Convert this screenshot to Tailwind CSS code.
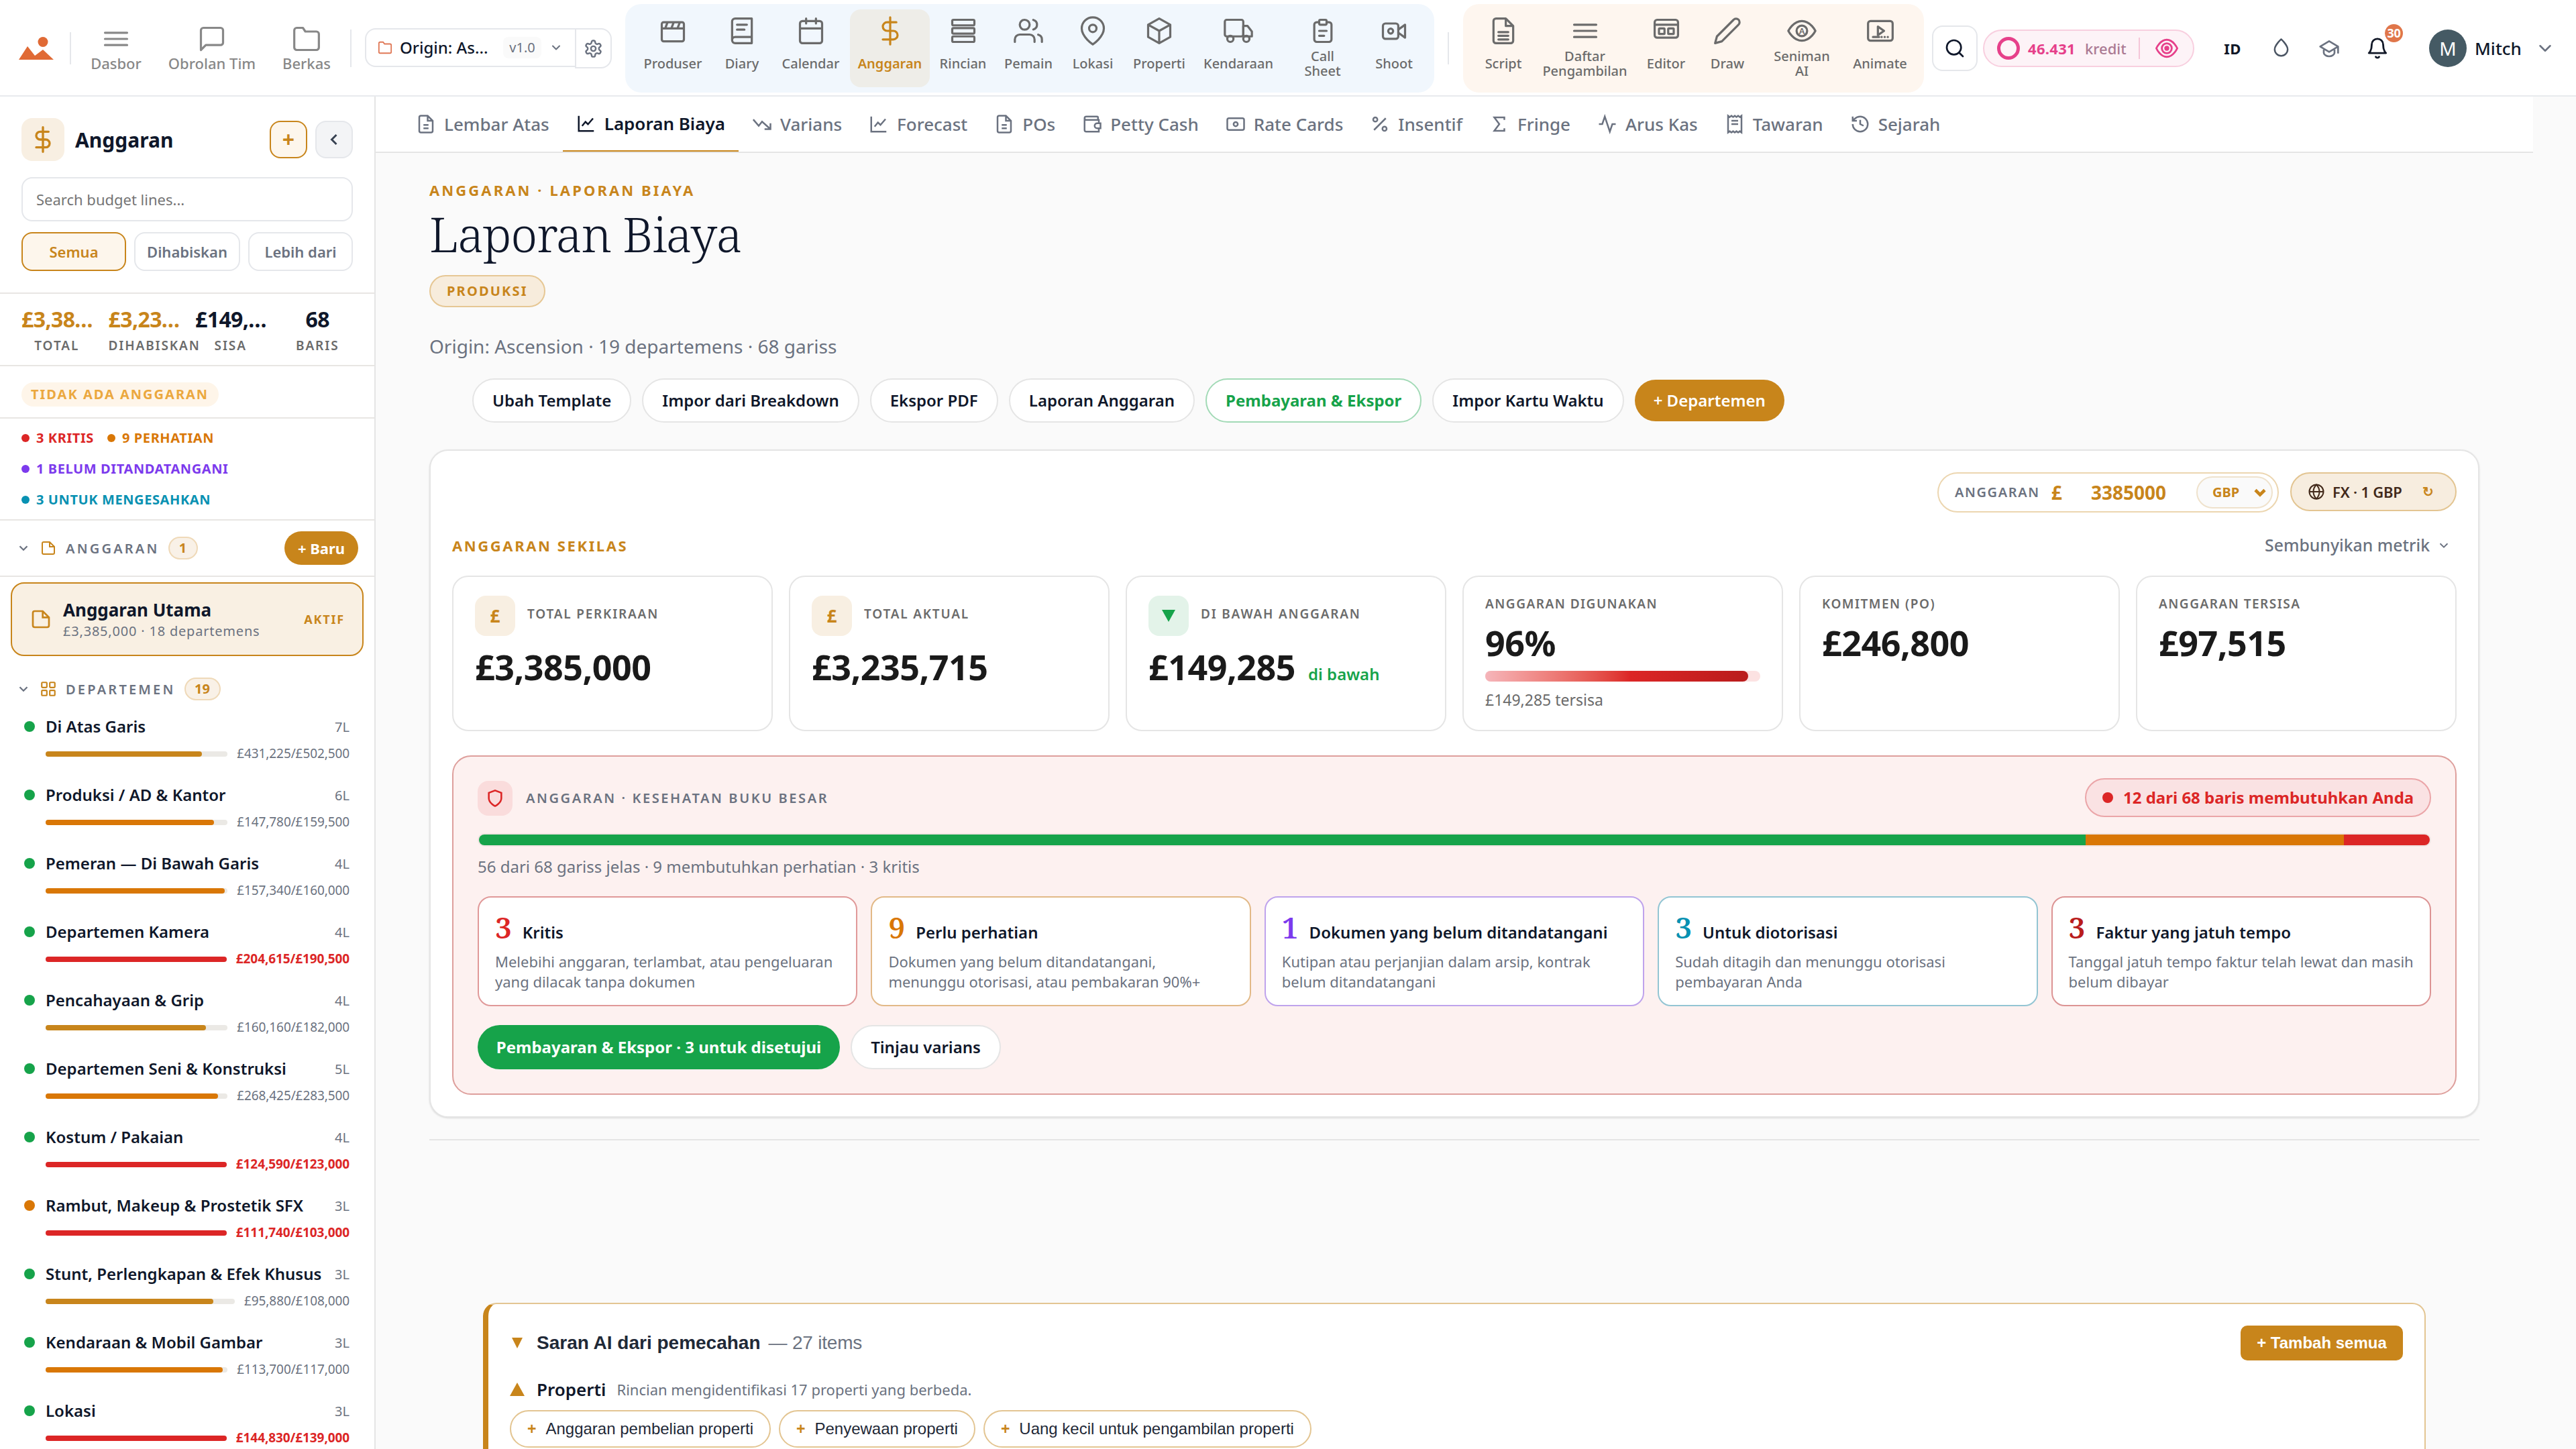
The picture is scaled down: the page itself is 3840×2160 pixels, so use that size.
<!DOCTYPE html>
<html lang="id">
<head>
    <meta charset="UTF-8">
    <meta name="viewport" content="width=device-width, initial-scale=1.0">
    <title>Anggaran - Laporan Biaya</title>
    <script src="https://cdn.jsdelivr.net/npm/@tailwindcss/browser@4"></script>
</head>
<body class="w-[3840px] h-[2160px] overflow-hidden bg-[#fafafa] font-['Noto_Sans',sans-serif] text-[#0f172a]">

    <!-- Icon sprite -->
    <svg class="hidden" xmlns="http://www.w3.org/2000/svg">
        <symbol id="menu" viewBox="0 0 24 24"><path d="M3 7h18M3 12h18M3 17h18"/></symbol>
        <symbol id="chat" viewBox="0 0 24 24"><path d="M21 15a2 2 0 0 1-2 2H7l-4 4V5a2 2 0 0 1 2-2h14a2 2 0 0 1 2 2z"/></symbol>
        <symbol id="folder" viewBox="0 0 24 24"><path d="M22 19a2 2 0 0 1-2 2H4a2 2 0 0 1-2-2V5a2 2 0 0 1 2-2h5l2 3h9a2 2 0 0 1 2 2z"/></symbol>
        <symbol id="chevron" viewBox="0 0 24 24"><path d="m6 9 6 6 6-6"/></symbol>
        <symbol id="gear" viewBox="0 0 24 24"><circle cx="12" cy="12" r="3"/><path d="M12.22 2h-.44a2 2 0 0 0-2 2v.18a2 2 0 0 1-1 1.73l-.43.25a2 2 0 0 1-2 0l-.15-.08a2 2 0 0 0-2.73.73l-.22.38a2 2 0 0 0 .73 2.73l.15.1a2 2 0 0 1 1 1.72v.51a2 2 0 0 1-1 1.74l-.15.09a2 2 0 0 0-.73 2.73l.22.38a2 2 0 0 0 2.73.73l.15-.08a2 2 0 0 1 2 0l.43.25a2 2 0 0 1 1 1.73V20a2 2 0 0 0 2 2h.44a2 2 0 0 0 2-2v-.18a2 2 0 0 1 1-1.73l.43-.25a2 2 0 0 1 2 0l.15.08a2 2 0 0 0 2.73-.73l.22-.39a2 2 0 0 0-.73-2.73l-.15-.08a2 2 0 0 1-1-1.74v-.5a2 2 0 0 1 1-1.74l.15-.09a2 2 0 0 0 .73-2.73l-.22-.38a2 2 0 0 0-2.73-.73l-.15.08a2 2 0 0 1-2 0l-.43-.25a2 2 0 0 1-1-1.73V4a2 2 0 0 0-2-2z"/></symbol>
        <symbol id="clapper" viewBox="0 0 24 24"><rect x="3" y="5" width="18" height="15.5" rx="1.5"/><path d="M3 10h18M7.5 5.5 6 9.5M12.5 5.5 11 9.5M17.5 5.5 16 9.5"/></symbol>
        <symbol id="book" viewBox="0 0 24 24"><path d="M20 2H6.5A2.5 2.5 0 0 0 4 4.5v15A2.5 2.5 0 0 0 6.5 22H20zM4 19.5A2.5 2.5 0 0 1 6.5 17H20M8 7h8M8 11h6"/></symbol>
        <symbol id="calendar" viewBox="0 0 24 24"><rect x="3" y="4" width="18" height="18" rx="2"/><path d="M16 2v4M8 2v4M3 10h18"/></symbol>
        <symbol id="dollar" viewBox="0 0 24 24"><path d="M12 1v22M17 5H9.5a3.5 3.5 0 0 0 0 7h5a3.5 3.5 0 0 1 0 7H6"/></symbol>
        <symbol id="rows" viewBox="0 0 24 24"><rect x="3" y="3" width="18" height="4.5" rx="1"/><rect x="3" y="9.75" width="18" height="4.5" rx="1"/><rect x="3" y="16.5" width="18" height="4.5" rx="1"/></symbol>
        <symbol id="users" viewBox="0 0 24 24"><path d="M17 21v-2a4 4 0 0 0-4-4H5a4 4 0 0 0-4 4v2M23 21v-2a4 4 0 0 0-3-3.87M16 3.13a4 4 0 0 1 0 7.75"/><circle cx="9" cy="7" r="4"/></symbol>
        <symbol id="pin" viewBox="0 0 24 24"><path d="M21 10c0 7-9 13-9 13s-9-6-9-13a9 9 0 0 1 18 0z"/><circle cx="12" cy="10" r="3"/></symbol>
        <symbol id="box" viewBox="0 0 24 24"><path d="M12 2l9 5v10l-9 5-9-5V7zM3 7l9 5 9-5M12 12v10"/></symbol>
        <symbol id="truck" viewBox="0 0 24 24"><rect x="1" y="3" width="15" height="13.5" rx="1.5"/><path d="M16 8h3.5L23 12.5v4h-7z"/><circle cx="5.5" cy="18.5" r="2.5"/><circle cx="18.5" cy="18.5" r="2.5"/></symbol>
        <symbol id="clipboard" viewBox="0 0 24 24"><path d="M15 5h2a2 2 0 0 1 2 2v12a2 2 0 0 1-2 2H7a2 2 0 0 1-2-2V7a2 2 0 0 1 2-2h2M9 12h6M9 16h4"/><rect x="9" y="3" width="6" height="4" rx="1"/></symbol>
        <symbol id="camera" viewBox="0 0 24 24"><rect x="3" y="6" width="12.5" height="12.5" rx="2"/><circle cx="9.3" cy="12.2" r="2"/><path d="M15.5 11 21 7v10.5l-5.5-4"/></symbol>
        <symbol id="script" viewBox="0 0 24 24"><path d="M14 2H6a2 2 0 0 0-2 2v16a2 2 0 0 0 2 2h12a2 2 0 0 0 2-2V8zM14 2v6h6M8 13h8M8 16h8M8 19h8"/></symbol>
        <symbol id="editor" viewBox="0 0 24 24"><rect x="2.5" y="3" width="19" height="14.5" rx="2"/><path d="M2.5 7h19"/><rect x="6" y="10" width="4.5" height="4.5" rx=".5"/><rect x="13.5" y="10" width="4.5" height="4.5" rx=".5"/></symbol>
        <symbol id="pencil" viewBox="0 0 24 24"><path d="M17 3a2.83 2.83 0 1 1 4 4L7.5 20.5 2 22l1.5-5.5z"/></symbol>
        <symbol id="eye-a" viewBox="0 0 24 24"><path d="M1 12s4-8 11-8 11 8 11 8-4 8-11 8S1 12 1 12z"/><circle cx="12" cy="12" r="4.3"/><text x="12" y="14.6" text-anchor="middle" font-size="7" font-weight="600" fill="currentColor" stroke="none">A</text></symbol>
        <symbol id="animate" viewBox="0 0 24 24"><rect x="2" y="4" width="20" height="16" rx="2"/><path d="m10 8.500 5 3.500-5 3.500z"/><path d="M6 17h5M13 17h.1M15.500 17h.1M18 17h.1"/></symbol>
        <symbol id="search" viewBox="0 0 24 24"><circle cx="11" cy="11" r="8"/><path d="m21 21-4.350-4.350"/></symbol>
        <symbol id="eye-target" viewBox="0 0 24 24"><path d="M1 12s4-9 11-9 11 9 11 9-4 9-11 9S1 12 1 12z"/><circle cx="12" cy="12" r="5.200"/><circle cx="12" cy="12" r="1.600" fill="currentColor"/></symbol>
        <symbol id="drop" viewBox="0 0 24 24"><path d="M12 2s8 7.500 8 12.500a8 8 0 0 1-16 0C4 9.500 12 2 12 2z"/></symbol>
        <symbol id="cap" viewBox="0 0 24 24"><path d="M22 10 12 4 2 10l10 6zM6 12.500V17c0 2 3 4 6 4s6-2 6-4v-4.500M22 10v7"/></symbol>
        <symbol id="bell" viewBox="0 0 24 24"><path d="M18 8A6 6 0 0 0 6 8c0 7-3 9-3 9h18s-3-2-3-9M13.730 21a2 2 0 0 1-3.460 0"/></symbol>
        <symbol id="file-text" viewBox="0 0 24 24"><path d="M14 2H6a2 2 0 0 0-2 2v16a2 2 0 0 0 2 2h12a2 2 0 0 0 2-2V8zM14 2v6h6M9 13h6M9 17h6"/></symbol>
        <symbol id="file" viewBox="0 0 24 24"><path d="M14 3H5a2 2 0 0 0-2 2v14a2 2 0 0 0 2 2h14a2 2 0 0 0 2-2V10zM14 3v7h7"/></symbol>
        <symbol id="chart" viewBox="0 0 24 24"><path d="M3 3v18h18M7 15l4-5 3 3 6-7"/></symbol>
        <symbol id="trend-down" viewBox="0 0 24 24"><path d="M1.500 6.500 8 14l4-5 10 9M22 11v7h-7"/></symbol>
        <symbol id="wallet" viewBox="0 0 24 24"><path d="M19 7V4a1 1 0 0 0-1-1H5a2 2 0 0 0 0 4h15v4M3 5v14a2 2 0 0 0 2 2h15v-4"/><path d="M22 11h-4a3 3 0 0 0 0 6h4z"/></symbol>
        <symbol id="cash" viewBox="0 0 24 24"><rect x="2" y="5" width="20" height="14" rx="2"/><circle cx="12" cy="12" r="2.500"/><path d="M6 12h.1M18 12h.1"/></symbol>
        <symbol id="percent" viewBox="0 0 24 24"><path d="M19 5 5 19"/><circle cx="6.500" cy="6.500" r="2.500"/><circle cx="17.500" cy="17.500" r="2.500"/></symbol>
        <symbol id="sigma" viewBox="0 0 24 24"><path d="M18 7V4H6l6 8-6 8h12v-3"/></symbol>
        <symbol id="pulse" viewBox="0 0 24 24"><path d="M22 12h-4l-3 9L9 3l-3 9H2"/></symbol>
        <symbol id="receipt" viewBox="0 0 24 24"><path d="M4 2v20l2-1.500L8 22l2-1.500 2 1.500 2-1.500 2 1.500 2-1.500 2 1.500V2l-2 1.500L16 2l-2 1.500L12 2l-2 1.500L8 2 6 3.500zM8 8h8M8 12h8"/></symbol>
        <symbol id="history" viewBox="0 0 24 24"><path d="M3 12a9 9 0 1 0 9-9 9.750 9.750 0 0 0-6.740 2.740L3 8M3 3v5h5M12 7v5l4 2"/></symbol>
        <symbol id="grid" viewBox="0 0 24 24"><rect x="3" y="3" width="7" height="7" rx="1"/><rect x="14" y="3" width="7" height="7" rx="1"/><rect x="3" y="14" width="7" height="7" rx="1"/><rect x="14" y="14" width="7" height="7" rx="1"/></symbol>
        <symbol id="shield" viewBox="0 0 24 24"><path d="M12 22s8-4 8-10V5l-8-3-8 3v7c0 6 8 10 8 10z"/></symbol>
        <symbol id="globe" viewBox="0 0 24 24"><circle cx="12" cy="12" r="10.500"/><path d="M1.500 12h21M12 1.500c3 3 4.500 6.500 4.500 10.500s-1.500 7.500-4.500 10.500C9 19.500 7.500 16 7.500 12S9 4.500 12 1.500z"/></symbol>
    </svg>

    <!-- Top bar -->
    <header class="flex items-center h-[144px] pl-7 bg-white shadow-[inset_0_-2px_0_#e8eaed] fill-none stroke-current [stroke-linecap:round] [stroke-linejoin:round]">
        <svg class="w-[52px] h-[34px] shrink-0 fill-[#e06a35] stroke-none" viewBox="0 0 52 34"><path d="M0 34 13 14l11 14 12-9 16 15z"/><circle cx="36" cy="7.500" r="7.500"/></svg>
        <div class="w-0.5 h-12 ml-6 shrink-0 bg-[#e5e7eb]"></div>
        <nav class="flex gap-1.5 ml-[13px] shrink-0 text-[22px] leading-7 font-medium text-[#888888] stroke-[1.75]">
            <a class="w-[108px] flex flex-col items-center whitespace-nowrap"><svg class="size-11"><use href="#menu"/></svg>Dasbor</a>
            <a class="w-[166px] flex flex-col items-center whitespace-nowrap"><svg class="size-11"><use href="#chat"/></svg>Obrolan Tim</a>
            <a class="w-[104px] flex flex-col items-center whitespace-nowrap"><svg class="size-11"><use href="#folder"/></svg>Berkas</a>
        </nav>
        <div class="w-0.5 h-14 ml-[13px] shrink-0 bg-[#e5e7eb]"></div>
        <div class="flex items-start h-[60px] ml-5 shrink-0">
            <div class="w-[313px] h-[58px] flex items-center pl-[17px] border-2 border-r-0 border-[#e5e7eb] rounded-l-2xl">
                <svg class="size-[22px] text-[#e07856] stroke-2"><use href="#folder"/></svg>
                <span class="ml-[11px] w-[134px] text-[24px] font-medium whitespace-nowrap">Origin: As...</span>
                <span class="ml-5 w-[57px] h-8 rounded-lg bg-[#fafafa] text-[20px] leading-8 text-center text-[#6b7280]">v1.0</span>
                <svg class="ml-3 size-5 text-[#6b7280] stroke-[2.5]"><use href="#chevron"/></svg>
            </div>
            <div class="w-[55px] h-[60px] flex items-center justify-center border-2 border-[#e5e7eb] rounded-r-2xl text-[#6b7280]"><svg class="size-[29px] stroke-2"><use href="#gear"/></svg></div>
        </div>

        <nav class="flex items-center gap-1 h-[132px] ml-5 px-4 shrink-0 rounded-[24px] bg-[#f1f7fd] text-[20px] leading-[22px] font-medium text-[#6b6b6b] text-center stroke-[1.75]">
            <a class="w-[110px] h-[116px] pt-2.5 flex flex-col items-center"><svg class="size-11"><use href="#clapper"/></svg><span class="h-11 mt-[5px] flex items-center">Produser</span></a>
            <a class="w-[88px] h-[116px] pt-2.5 flex flex-col items-center"><svg class="size-11"><use href="#book"/></svg><span class="h-11 mt-[5px] flex items-center">Diary</span></a>
            <a class="w-[109px] h-[116px] pt-2.5 flex flex-col items-center"><svg class="size-11"><use href="#calendar"/></svg><span class="h-11 mt-[5px] flex items-center">Calendar</span></a>
            <a class="w-[119px] h-[116px] pt-2.5 flex flex-col items-center rounded-2xl bg-[#eeede8] text-[#c8851b] font-semibold"><svg class="size-11"><use href="#dollar"/></svg><span class="h-11 mt-[5px] flex items-center">Anggaran</span></a>
            <a class="w-[91px] h-[116px] pt-2.5 flex flex-col items-center"><svg class="size-11"><use href="#rows"/></svg><span class="h-11 mt-[5px] flex items-center">Rincian</span></a>
            <a class="w-[96px] h-[116px] pt-2.5 flex flex-col items-center"><svg class="size-11"><use href="#users"/></svg><span class="h-11 mt-[5px] flex items-center">Pemain</span></a>
            <a class="w-[88px] h-[116px] pt-2.5 flex flex-col items-center"><svg class="size-11"><use href="#pin"/></svg><span class="h-11 mt-[5px] flex items-center">Lokasi</span></a>
            <a class="w-[102px] h-[116px] pt-2.5 flex flex-col items-center"><svg class="size-11"><use href="#box"/></svg><span class="h-11 mt-[5px] flex items-center">Properti</span></a>
            <a class="w-[126px] h-[116px] pt-2.5 flex flex-col items-center"><svg class="size-11"><use href="#truck"/></svg><span class="h-11 mt-[5px] flex items-center">Kendaraan</span></a>
            <a class="w-[117px] h-[116px] pt-2.5 flex flex-col items-center"><svg class="size-11"><use href="#clipboard"/></svg><span class="h-11 mt-[5px] flex items-center">Call<br>Sheet</span></a>
            <a class="w-[88px] h-[116px] pt-2.5 flex flex-col items-center"><svg class="size-11"><use href="#camera"/></svg><span class="h-11 mt-[5px] flex items-center">Shoot</span></a>
        </nav>
        <div class="w-0.5 h-12 ml-5 shrink-0 bg-[#e5e7eb]"></div>
        <nav class="flex items-center gap-1 h-[132px] ml-[21px] px-4 shrink-0 rounded-[24px] bg-[#fef6ef] text-[20px] leading-[22px] font-medium text-[#6b6b6b] text-center stroke-[1.75]">
            <a class="w-[88px] h-[116px] pt-2.5 flex flex-col items-center"><svg class="size-11"><use href="#script"/></svg><span class="h-11 mt-[5px] flex items-center">Script</span></a>
            <a class="w-[147px] h-[116px] pt-2.5 flex flex-col items-center"><svg class="size-11"><use href="#menu"/></svg><span class="h-11 mt-[5px] flex items-center">Daftar<br>Pengambilan</span></a>
            <a class="w-[87px] h-[116px] pt-2.5 flex flex-col items-center"><svg class="size-11"><use href="#editor"/></svg><span class="h-11 mt-[5px] flex items-center">Editor</span></a>
            <a class="w-[88px] h-[116px] pt-2.5 flex flex-col items-center"><svg class="size-11"><use href="#pencil"/></svg><span class="h-11 mt-[5px] flex items-center">Draw</span></a>
            <a class="w-[126px] h-[116px] pt-2.5 flex flex-col items-center"><svg class="size-11"><use href="#eye-a"/></svg><span class="h-11 mt-[5px] flex items-center">Seniman<br>AI</span></a>
            <a class="w-[99px] h-[116px] pt-2.5 flex flex-col items-center"><svg class="size-11"><use href="#animate"/></svg><span class="h-11 mt-[5px] flex items-center">Animate</span></a>
        </nav>

        <button class="size-[68px] ml-[12px] shrink-0 flex items-center justify-center border-2 border-[#e5e7eb] rounded-2xl"><svg class="size-8 stroke-2"><use href="#search"/></svg></button>
        <div class="flex items-center w-[315px] h-14 ml-2 pl-[19px] shrink-0 rounded-full border-2 border-[#f8cfdf] bg-[#fdf3f7]">
            <div class="size-[34px] rounded-full border-[5px] border-[#e6408a]"></div>
            <span class="ml-3 text-[22px] font-bold text-[#e6408a] tracking-[0.3px]">46.431</span>
            <span class="ml-[14px] text-[22px] font-medium text-[#ab7a93]">kredit</span>
            <div class="w-0.5 h-8 ml-[18px] bg-[#f5c6d8]"></div>
            <svg class="size-[34px] ml-[23px] text-[#e6408a] stroke-2"><use href="#eye-target"/></svg>
        </div>
        <div class="flex ml-[21px] shrink-0 text-[#4b5563] stroke-2">
            <div class="w-[72px] text-center text-[22px] leading-9 font-bold text-[#111827] tracking-[0.5px]">ID</div>
            <div class="w-[72px] pb-1 flex items-center justify-center"><svg class="size-[29px]"><use href="#drop"/></svg></div>
            <div class="w-[72px] flex items-center justify-center text-[#6b7280]"><svg class="size-8"><use href="#cap"/></svg></div>
            <div class="w-[72px] flex items-center justify-center relative text-[#111827]"><svg class="size-[34px]"><use href="#bell"/></svg>
                <span class="absolute -top-[18px] right-[-2px] size-[27px] rounded-full bg-[#e0764a] text-white text-[18px] leading-[26px] font-bold text-center tracking-[-0.3px]">30</span>
            </div>
        </div>
        <div class="size-14 ml-[41px] shrink-0 rounded-full bg-[#455a64] text-white text-[28px] leading-14 text-center">M</div>
        <span class="ml-3 text-[26px] font-medium">Mitch</span>
        <svg class="size-[30px] ml-[20px] shrink-0 text-[#6b7280] stroke-2"><use href="#chevron"/></svg>
    </header>

    <div class="flex h-[2016px]">
        <!-- Sidebar -->
        <aside class="w-[560px] shrink-0 bg-white border-r-2 border-[#e5e5e5] overflow-hidden">
            <div class="p-8 border-b-2 border-[#e8e6e3]">
                <div class="flex items-center">
                    <div class="size-16 rounded-2xl bg-[#f8efe2] flex items-center justify-center"><svg class="size-10 fill-none stroke-[#c8851b] stroke-2 [stroke-linecap:round]"><use href="#dollar"/></svg></div>
                    <h2 class="ml-4 text-[30px] font-bold">Anggaran</h2>
                    <button class="ml-auto size-14 rounded-2xl border-2 border-[#c8851b] bg-[#fdf6ec] text-[#c8851b] text-[32px] leading-none font-bold">+</button>
                    <button class="ml-3 size-14 rounded-2xl border-2 border-[#e5e7eb] bg-[#f3f4f6] flex items-center justify-center"><svg class="size-7 rotate-90 fill-none stroke-[#374151] stroke-[2.5]"><use href="#chevron"/></svg></button>
                </div>
                <input type="text" placeholder="Search budget lines..." class="block w-full h-[66px] mt-6 px-5 rounded-2xl border-2 border-[#e5e7eb] text-[22px] placeholder:text-[#757575]">
                <div class="flex gap-3 mt-4 text-[22px] font-semibold text-[#6b7280]">
                    <button class="w-[156px] h-[58px] rounded-2xl border-2 border-[#c8851b] bg-[#fdf6ec] text-[#c8851b]">Semua</button>
                    <button class="w-[158px] h-[58px] rounded-2xl border-2 border-[#e5e7eb]">Dihabiskan</button>
                    <button class="w-[156px] h-[58px] rounded-2xl border-2 border-[#e5e7eb]">Lebih dari</button>
                </div>
            </div>
            <div class="grid grid-cols-4 gap-6 px-8 pt-[18px] pb-[17px] border-b-2 border-[#e8e6e3] text-center whitespace-nowrap">
                <div class="min-w-0"><div class="text-[32px] leading-10 font-bold tracking-[-0.6px] text-[#c8851b]">£3,38…</div><div class="mt-[7px] text-[19px] leading-6 font-semibold tracking-[1.9px] text-[#6b6b6b]">TOTAL</div></div>
                <div class="min-w-0"><div class="text-[32px] leading-10 font-bold tracking-[-0.6px] text-[#c8851b]">£3,23…</div><div class="mt-[7px] text-[19px] leading-6 font-semibold tracking-[1.9px] text-[#6b6b6b]">DIHABISKAN</div></div>
                <div class="min-w-0"><div class="text-[32px] leading-10 font-bold tracking-[-0.6px]">£149,…</div><div class="mt-[7px] text-[19px] leading-6 font-semibold tracking-[1.9px] text-[#6b6b6b]">SISA</div></div>
                <div class="min-w-0"><div class="text-[32px] leading-10 font-bold tracking-[-0.6px]">68</div><div class="mt-[7px] text-[19px] leading-6 font-semibold tracking-[1.9px] text-[#6b6b6b]">BARIS</div></div>
            </div>
            <div class="px-8 pt-6 pb-4 border-b-2 border-[#e8e6e3]">
                <div class="w-[294px] h-9 pl-3.5 rounded-full bg-[#fef5e9] text-[20px] leading-9 font-bold tracking-[2px] text-[#eba83f] whitespace-nowrap">TIDAK ADA ANGGARAN</div>
            </div>
            <div class="flex flex-wrap gap-x-5 gap-y-5 px-8 pt-4 pb-4 border-b-2 border-[#e8e6e3] text-[20px] leading-[26px] font-bold tracking-[0.6px]">
                <span class="flex items-center text-[#dc2626]"><i class="size-3 mr-2.5 rounded-full bg-[#dc2626]"></i>3 KRITIS</span>
                <span class="flex items-center text-[#d97706]"><i class="size-3 mr-2.5 rounded-full bg-[#d97706]"></i>9 PERHATIAN</span>
                <span class="w-full flex items-center text-[#7c3aed]"><i class="size-3 mr-2.5 rounded-full bg-[#7c3aed]"></i>1 BELUM DITANDATANGANI</span>
                <span class="w-full flex items-center text-[#0891b2]"><i class="size-3 mr-2.5 rounded-full bg-[#0891b2]"></i>3 UNTUK MENGESAHKAN</span>
            </div>
            <div class="flex items-center h-[84px] pl-6 pr-6 border-b-2 border-[#e8e6e3] fill-none">
                <svg class="size-[22px] stroke-[#6b7280] stroke-[2.5]"><use href="#chevron"/></svg>
                <svg class="size-6 ml-3.5 stroke-[#c8851b] stroke-2"><use href="#file"/></svg>
                <span class="ml-3.5 pt-0.5 text-[20px] font-semibold tracking-[3.2px] text-[#6b7280]">ANGGARAN</span>
                <span class="ml-[13px] w-11 h-[34px] rounded-full border-2 border-[#efd9b8] bg-[#f9f1e7] text-[20px] leading-[29px] text-center font-bold text-[#c8851b]">1</span>
                <button class="ml-auto w-[110px] h-[50px] rounded-full bg-[#c8851b] text-white text-[22px] font-bold">+ Baru</button>
            </div>
            <div class="flex items-center h-[110px] mt-2 mx-4 pl-[27px] pr-[26px] rounded-[20px] border-2 border-[#c8851b] bg-[#f9f0e3]">
                <svg class="size-8 shrink-0 fill-none stroke-[#c8851b] stroke-2"><use href="#file"/></svg>
                <div class="ml-[17px]">
                    <div class="text-[26px] leading-9 font-bold">Anggaran Utama</div>
                    <div class="text-[20px] leading-7 tracking-[0.8px] text-[#6b7280]">£3,385,000 · 18 departemens</div>
                </div>
                <span class="ml-auto text-[18px] font-bold tracking-[1.8px] text-[#c8851b]">AKTIF</span>
            </div>
            <div class="flex items-center h-[34px] mt-8 pl-6 fill-none">
                <svg class="size-[22px] stroke-[#6b7280] stroke-[2.5]"><use href="#chevron"/></svg>
                <svg class="size-[26px] ml-[13px] stroke-[#c8851b] stroke-2"><use href="#grid"/></svg>
                <span class="ml-[13px] pt-0.5 text-[20px] font-semibold tracking-[3.2px] text-[#6b7280]">DEPARTEMEN</span>
                <span class="ml-[13px] w-[54px] h-[34px] rounded-full border-2 border-[#efd9b8] bg-[#f9f1e7] text-[20px] leading-[29px] text-center font-bold text-[#c8851b]">19</span>
            </div>
            <div id="departments" class="mt-[21px] pl-9 pr-[37px]"></div>
        </aside>

        <!-- Main -->
        <main class="flex-1 min-w-0">
            <nav class="flex items-stretch w-[3216px] h-[84px] pl-10 bg-white shadow-[inset_0_-2px_0_#e5e5e5] text-[26px] text-[#6b7280] font-medium fill-none stroke-current stroke-2">
                <a class="flex items-center gap-3 px-5 pb-0.5"><svg class="size-[30px]"><use href="#file-text"/></svg>Lembar Atas</a>
                <a class="flex items-center gap-3 px-5 h-[82px] border-b-2 border-[#c8851b] text-[#0f172a] font-semibold"><svg class="size-[30px]"><use href="#chart"/></svg>Laporan Biaya</a>
                <a class="flex items-center gap-3 px-5 pb-0.5"><svg class="size-[30px]"><use href="#trend-down"/></svg>Varians</a>
                <a class="flex items-center gap-3 px-5 pb-0.5"><svg class="size-[30px]"><use href="#chart"/></svg>Forecast</a>
                <a class="flex items-center gap-3 px-5 pb-0.5"><svg class="size-[30px]"><use href="#file-text"/></svg>POs</a>
                <a class="flex items-center gap-3 px-5 pb-0.5"><svg class="size-[30px]"><use href="#wallet"/></svg>Petty Cash</a>
                <a class="flex items-center gap-3 px-5 pb-0.5"><svg class="size-[30px]"><use href="#cash"/></svg>Rate Cards</a>
                <a class="flex items-center gap-3 px-5 pb-0.5"><svg class="size-[30px]"><use href="#percent"/></svg>Insentif</a>
                <a class="flex items-center gap-3 px-5 pb-0.5"><svg class="size-[30px]"><use href="#sigma"/></svg>Fringe</a>
                <a class="flex items-center gap-3 px-5 pb-0.5"><svg class="size-[30px]"><use href="#pulse"/></svg>Arus Kas</a>
                <a class="flex items-center gap-3 px-5 pb-0.5"><svg class="size-[30px]"><use href="#receipt"/></svg>Tawaran</a>
                <a class="flex items-center gap-3 px-5 pb-0.5"><svg class="size-[30px]"><use href="#history"/></svg>Sejarah</a>
            </nav>

            <div class="w-[3056px] ml-20">
                <div class="pt-[39px] text-[22px] leading-8 font-bold tracking-[3.1px] text-[#c8851b]">ANGGARAN · LAPORAN BIAYA</div>
                <h1 class="mt-[7px] text-[72px] leading-[84px] font-light tracking-[-1.4px] font-['Noto_Serif','Liberation_Serif',serif]">Laporan Biaya</h1>
                <div class="inline-block mt-5 h-12 px-6 rounded-full border-2 border-[#e6c794] bg-[#f7ecdc] text-[20px] leading-[44px] font-bold tracking-[2.2px] text-[#c8851b]">PRODUKSI</div>
                <p class="mt-[38px] text-[28px] leading-10 text-[#6b7280]">Origin: Ascension · 19 departemens · 68 gariss</p>
                <div class="flex items-center gap-4 mt-[28px] pl-16 text-[24px] font-semibold">
                    <button class="h-[66px] px-7 rounded-full border-2 border-[#e5e5e5] bg-white">Ubah Template</button>
                    <button class="h-[66px] px-7 rounded-full border-2 border-[#e5e5e5] bg-white">Impor dari Breakdown</button>
                    <button class="h-[66px] px-7 rounded-full border-2 border-[#e5e5e5] bg-white">Ekspor PDF</button>
                    <button class="h-[66px] px-7 rounded-full border-2 border-[#e5e5e5] bg-white">Laporan Anggaran</button>
                    <button class="h-[66px] px-7 rounded-full border-2 border-[#a2dab6] bg-white font-bold text-[#16a34a]">Pembayaran &amp; Ekspor</button>
                    <button class="h-[66px] px-7 rounded-full border-2 border-[#e5e5e5] bg-white">Impor Kartu Waktu</button>
                    <button class="h-[62px] px-7 rounded-full bg-[#c8851b] text-white">+ Departemen</button>
                </div>

                <!-- Overview card -->
                <section class="h-[996px] mt-10 px-8 pt-8 rounded-[28px] border-2 border-[#e5e5e5] bg-white shadow-sm">
                    <div class="flex justify-end items-start gap-[17px]">
                        <div class="flex items-center w-[509px] h-[60px] pl-6 pr-[7px] rounded-full border-2 border-[#ecd6b0]">
                            <span class="text-[20px] font-semibold tracking-[1.6px] text-[#6b7280]">ANGGARAN</span>
                            <span class="ml-[17px] text-[28px] font-bold text-[#c8851b]">£</span>
                            <span class="ml-auto text-[28px] font-bold text-[#c8851b]">3385000</span>
                            <span class="flex items-center w-[114px] h-12 ml-[45px] pl-[22px] rounded-full border-2 border-[#efe2cc] bg-[#fafafa] text-[20px] font-bold text-[#c8851b]">GBP<svg class="size-7 ml-[17px] fill-none stroke-[#c8851b] stroke-[4]"><use href="#chevron"/></svg></span>
                        </div>
                        <div class="flex items-center w-[248px] h-[58px] pl-[25px] rounded-full border-2 border-[#e3c592] bg-[#f7eddf] text-[22px] font-semibold text-[#42291a]">
                            <svg class="size-6 fill-none stroke-current stroke-2"><use href="#globe"/></svg>
                            <span class="ml-3 tracking-[-0.2px]">FX · 1 GBP</span>
                            <span class="ml-auto mr-8 text-[20px] text-[#c8851b]">↻</span>
                        </div>
                    </div>
                    <div class="flex items-center justify-between h-10 mt-[29px]">
                        <h3 class="text-[22px] font-bold tracking-[2.6px] text-[#c8851b]">ANGGARAN SEKILAS</h3>
                        <div class="flex items-center pr-2 text-[24.8px] font-medium text-[#6b7280]">Sembunyikan metrik<svg class="ml-2.5 size-[22px] fill-none stroke-current stroke-2"><use href="#chevron"/></svg></div>
                    </div>
                    <div class="grid grid-cols-6 gap-6 mt-[25px] text-[#1a1a1a]">
                        <div class="h-[232px] px-8 pt-7 rounded-[24px] border-2 border-[#e5e5e5]">
                            <div class="flex items-center h-[60px]"><div class="size-[60px] rounded-2xl bg-[#f8efe2] text-[26px] leading-[60px] text-center font-bold text-[#c8851b]">£</div><span class="ml-[18px] pb-1.5 text-[19px] font-semibold tracking-[1.8px] text-[#6b6b6b]">TOTAL PERKIRAAN</span></div>
                            <div class="mt-[14px] text-[52px] leading-[64px] font-bold tracking-[-0.5px]">£3,385,000</div>
                        </div>
                        <div class="h-[232px] px-8 pt-7 rounded-[24px] border-2 border-[#e5e5e5]">
                            <div class="flex items-center h-[60px]"><div class="size-[60px] rounded-2xl bg-[#f8efe2] text-[26px] leading-[60px] text-center font-bold text-[#c8851b]">£</div><span class="ml-[18px] pb-1.5 text-[19px] font-semibold tracking-[1.8px] text-[#6b6b6b]">TOTAL AKTUAL</span></div>
                            <div class="mt-[14px] text-[52px] leading-[64px] font-bold tracking-[-0.5px]">£3,235,715</div>
                        </div>
                        <div class="h-[232px] px-8 pt-7 rounded-[24px] border-2 border-[#e5e5e5]">
                            <div class="flex items-center h-[60px]"><div class="size-[60px] rounded-2xl bg-[#e3f3e9] flex items-center justify-center"><svg class="w-5 h-[18px] fill-[#16a34a]" viewBox="0 0 20 18"><path d="M0 0h20L10 18z"/></svg></div><span class="ml-[18px] pb-1.5 text-[19px] font-semibold tracking-[1.8px] text-[#6b6b6b]">DI BAWAH ANGGARAN</span></div>
                            <div class="mt-[14px] text-[52px] leading-[64px] font-bold tracking-[-0.5px]">£149,285 <span class="ml-1.5 text-[24px] tracking-normal font-semibold text-[#16a34a]">di bawah</span></div>
                        </div>
                        <div class="h-[232px] px-8 pt-[26px] rounded-[24px] border-2 border-[#e5e5e5]">
                            <div class="text-[19px] leading-7 font-semibold tracking-[1.5px] text-[#6b6b6b]">ANGGARAN DIGUNAKAN</div>
                            <div class="mt-[12px] text-[52px] leading-[64px] font-bold tracking-[-0.5px]">96%</div>
                            <div class="h-4 mt-[10px] rounded-full bg-[#fce2e2]"><div class="h-4 w-[95.6%] rounded-full bg-linear-to-r from-[#f5b5ba] via-[#dc2626] via-55% to-[#b91c1c]"></div></div>
                            <div class="mt-[11px] text-[23px] leading-8 text-[#6b6b6b]">£149,285 tersisa</div>
                        </div>
                        <div class="h-[232px] px-8 pt-[26px] rounded-[24px] border-2 border-[#e5e5e5]">
                            <div class="text-[19px] leading-7 font-semibold tracking-[1.5px] text-[#6b6b6b]">KOMITMEN (PO)</div>
                            <div class="mt-[12px] text-[52px] leading-[64px] font-bold tracking-[-0.5px]">£246,800</div>
                        </div>
                        <div class="h-[232px] px-8 pt-[26px] rounded-[24px] border-2 border-[#e5e5e5]">
                            <div class="text-[19px] leading-7 font-semibold tracking-[1.5px] text-[#6b6b6b]">ANGGARAN TERSISA</div>
                            <div class="mt-[12px] text-[52px] leading-[64px] font-bold tracking-[-0.5px]">£97,515</div>
                        </div>
                    </div>

                    <!-- Ledger health -->
                    <div class="h-[506px] mt-9 px-9 pt-8 rounded-[28px] border-2 border-[#de9f9c] bg-[#fdf1f0]">
                        <div class="flex items-center h-[58px]">
                            <div class="size-[52px] mt-0.5 rounded-2xl bg-[#fadcdc] flex items-center justify-center"><svg class="size-[28px] fill-none stroke-[#dc2626] stroke-[2.2]"><use href="#shield"/></svg></div>
                            <span class="ml-5 mt-0.5 text-[20px] font-semibold tracking-[2.6px] text-[#6b7280]">ANGGARAN · KESEHATAN BUKU BESAR</span>
                            <span class="ml-auto flex items-center w-[516px] h-[58px] pl-6 rounded-full border-2 border-[#eba5a8] bg-[#fae2e3] text-[24px] font-bold text-[#dc2626] whitespace-nowrap"><i class="size-4 mr-[15px] rounded-full bg-[#dc2626]"></i>12 dari 68 baris membutuhkan Anda</span>
                        </div>
                        <div class="flex h-5 mt-6 rounded-full border-2 border-[#f0e4e2] overflow-hidden">
                            <div class="flex-[56] bg-[#16a34a]"></div><div class="flex-[9] bg-[#d97706]"></div><div class="flex-[3] bg-[#dc2626]"></div>
                        </div>
                        <p class="mt-3 text-[24px] leading-9 text-[#6b7280]">56 dari 68 gariss jelas · 9 membutuhkan perhatian · 3 kritis</p>
                        <div class="grid grid-cols-5 gap-5 mt-[26px] text-[22px] leading-[30px] text-[#6b7280]">
                            <div class="h-[164px] px-6 pt-[13px] rounded-[20px] border-2 border-[#e09999] bg-white"><div class="flex items-baseline h-[62px] leading-[62px]"><b class="font-['Noto_Serif','Liberation_Serif',serif] text-[44px] font-semibold text-[#dc2626]">3</b><span class="ml-4 text-[24px] font-semibold text-[#0f172a]">Kritis</span></div><p class="mt-[5px]">Melebihi anggaran, terlambat, atau pengeluaran<br>yang dilacak tanpa dokumen</p></div>
                            <div class="h-[164px] px-6 pt-[13px] rounded-[20px] border-2 border-[#e2b987] bg-white"><div class="flex items-baseline h-[62px] leading-[62px]"><b class="font-['Noto_Serif','Liberation_Serif',serif] text-[44px] font-semibold text-[#d97706]">9</b><span class="ml-4 text-[24px] font-semibold text-[#0f172a]">Perlu perhatian</span></div><p class="mt-[5px]">Dokumen yang belum ditandatangani,<br>menunggu otorisasi, atau pembakaran 90%+</p></div>
                            <div class="h-[164px] px-6 pt-[13px] rounded-[20px] border-2 border-[#bfa3ec] bg-white"><div class="flex items-baseline h-[62px] leading-[62px]"><b class="font-['Noto_Serif','Liberation_Serif',serif] text-[44px] font-semibold text-[#7c3aed]">1</b><span class="ml-4 text-[24px] font-semibold text-[#0f172a]">Dokumen yang belum ditandatangani</span></div><p class="mt-[5px]">Kutipan atau perjanjian dalam arsip, kontrak<br>belum ditandatangani</p></div>
                            <div class="h-[164px] px-6 pt-[13px] rounded-[20px] border-2 border-[#93c5d3] bg-white"><div class="flex items-baseline h-[62px] leading-[62px]"><b class="font-['Noto_Serif','Liberation_Serif',serif] text-[44px] font-semibold text-[#0891b2]">3</b><span class="ml-4 text-[24px] font-semibold text-[#0f172a]">Untuk diotorisasi</span></div><p class="mt-[5px]">Sudah ditagih dan menunggu otorisasi<br>pembayaran Anda</p></div>
                            <div class="h-[164px] px-6 pt-[13px] rounded-[20px] border-2 border-[#dc9494] bg-white"><div class="flex items-baseline h-[62px] leading-[62px]"><b class="font-['Noto_Serif','Liberation_Serif',serif] text-[44px] font-semibold text-[#b91c1c]">3</b><span class="ml-4 text-[24px] font-semibold text-[#0f172a]">Faktur yang jatuh tempo</span></div><p class="mt-[5px]">Tanggal jatuh tempo faktur telah lewat dan masih<br>belum dibayar</p></div>
                        </div>
                        <div class="flex gap-4 mt-7 text-[24px] font-semibold">
                            <button class="w-[540px] h-[66px] rounded-full bg-[#16a34a] text-white font-bold">Pembayaran &amp; Ekspor · 3 untuk disetujui</button>
                            <button class="w-[224px] h-[66px] rounded-full border-2 border-[#e5e5e5] bg-white">Tinjau varians</button>
                        </div>
                    </div>
                </section>

                <hr class="mt-8 border-t-2 border-[#e5e5e5]">

                <!-- AI suggestions -->
                <section class="mt-[242px] ml-20 mr-20 h-[260px] pl-8 pr-8 pt-8 rounded-[20px] border-2 border-l-[8px] border-[#e3c592] border-l-[#c8851b] bg-white">
                    <div class="flex items-center h-[52px] font-['Liberation_Sans',sans-serif] text-[28px]">
                        <svg class="w-[22px] h-4 fill-[#c8851b]" viewBox="0 0 22 16"><path d="M3 0h16l-8 16z"/></svg>
                        <b class="ml-[18px] text-[#1f2937]">Saran AI dari pemecahan</b>
                        <span class="ml-3 text-[#6b7280] tracking-[-0.2px]">— 27 items</span>
                        <button class="ml-auto w-[242px] h-[52px] rounded-[10px] bg-[#c8851b] text-white text-[24px] font-bold">+ Tambah semua</button>
                    </div>
                    <div class="flex items-center h-9 mt-[25px] text-[22px] text-[#6b7280]">
                        <svg class="w-[22px] h-5 fill-[#c8851b]" viewBox="0 0 22 20"><path d="M11 0l11 20H0z"/></svg>
                        <span class="ml-[18px] text-[26px] font-semibold text-[#0f172a]">Properti</span>
                        <span class="ml-4">Rincian mengidentifikasi 17 properti yang berbeda.</span>
                    </div>
                    <div class="flex gap-3 mt-[13px] font-['Liberation_Sans',sans-serif] text-[24px] leading-[52px] text-[#1f2937]">
                        <span class="h-14 px-6 rounded-full border-2 border-[#e3c592] whitespace-nowrap"><b class="mr-[14px] text-[23px] text-[#c8851b]">+</b>Anggaran pembelian properti</span>
                        <span class="h-14 px-6 rounded-full border-2 border-[#e3c592] whitespace-nowrap"><b class="mr-[14px] text-[23px] text-[#c8851b]">+</b>Penyewaan properti</span>
                        <span class="h-14 px-6 rounded-full border-2 border-[#e3c592] whitespace-nowrap"><b class="mr-[14px] text-[23px] text-[#c8851b]">+</b>Uang kecil untuk pengambilan properti</span>
                    </div>
                </section>
            </div>
        </main>
    </div>

    <script>
        // name, line count, spent, budget, status dot
        const departments = [
            ['Di Atas Garis', 7, 431225, 502500, 'ok'],
            ['Produksi / AD & Kantor', 6, 147780, 159500, 'ok'],
            ['Pemeran — Di Bawah Garis', 4, 157340, 160000, 'ok'],
            ['Departemen Kamera', 4, 204615, 190500, 'ok'],
            ['Pencahayaan & Grip', 4, 160160, 182000, 'ok'],
            ['Departemen Seni & Konstruksi', 5, 268425, 283500, 'ok'],
            ['Kostum / Pakaian', 4, 124590, 123000, 'ok'],
            ['Rambut, Makeup & Prostetik SFX', 3, 111740, 103000, 'warn'],
            ['Stunt, Perlengkapan & Efek Khusus', 3, 95880, 108000, 'ok'],
            ['Kendaraan & Mobil Gambar', 3, 113700, 117000, 'ok'],
            ['Lokasi', 3, 144830, 139000, 'ok'],
        ];
        const money = n => '£' + n.toLocaleString('en-GB');

        document.getElementById('departments').innerHTML = departments.map(([name, lines, spent, budget, status]) => {
            const pct = Math.min(100, spent / budget * 100);
            const bar = spent > budget ? 'bg-[#dc2626]' : pct >= 90 ? 'bg-[#d97706]' : 'bg-[#c8851b]';
            const amount = spent > budget ? 'font-bold text-[#dc2626]' : 'text-[#6b7280]';
            const dot = status === 'warn' ? 'bg-[#d97706]' : 'bg-[#16a34a]';
            return `
            <div class="h-[102px]">
                <div class="flex items-center h-[36px]">
                    <i class="size-4 shrink-0 rounded-full ${dot}"></i>
                    <span class="ml-4 text-[24px] font-semibold whitespace-nowrap">${name.replace('&', '&amp;')}</span>
                    <span class="ml-auto pt-0.5 text-[20px] text-[#6b7280]">${lines}L</span>
                </div>
                <div class="flex items-center h-7 mt-[9px] pl-8">
                    <div class="flex-1 h-2 rounded-full bg-[#ebe9e5]"><div class="h-2 rounded-full ${bar}" style="width:${pct}%"></div></div>
                    <span class="ml-3.5 pb-0.5 text-[19px] tracking-[-0.1px] ${amount}">${money(spent)}/${money(budget)}</span>
                </div>
            </div>`;
        }).join('');
    </script>
</body>
</html>
